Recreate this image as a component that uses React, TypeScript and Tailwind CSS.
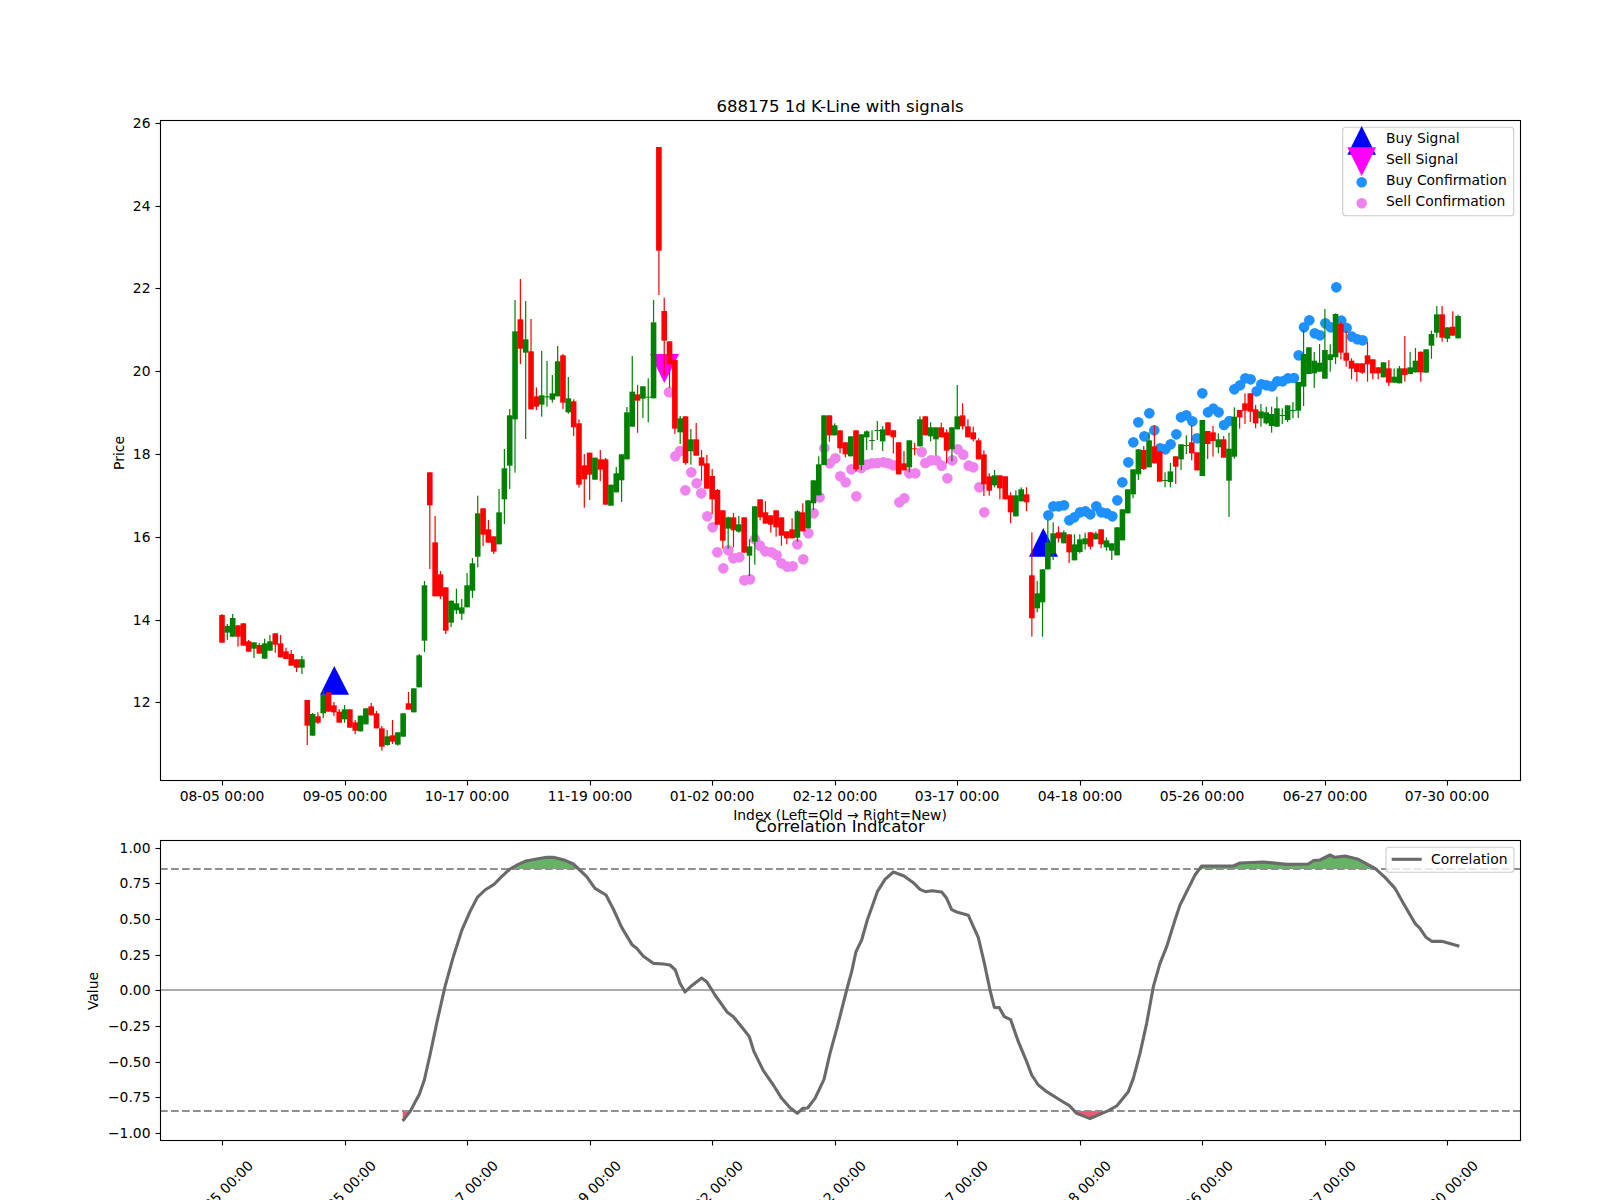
const X = (i: number) => 222 + 5.328 * i;

type C = [number, number, number, number, number];
const R = 1;
const G = 0;

// zoomed pixel readings: [colour, bodyTop, bodyBottom, wickTop, wickBottom], 3x from a y origin
const seg1: C[] = [
  [R,405,488,402,488],[G,438,458,432,480],[G,414,470,402,470],[R,436,470,436,500],[R,430,497,430,497],
  [R,484,515,480,515],[G,487,506,487,534],[R,495,521,489,521],[G,490,536,476,536],[G,484,512,465,512],
  [R,460,494,460,518],[R,490,532,465,532],[R,514,537,503,537],[R,522,557,510,557],[R,538,563,538,576],
  [G,538,563,528,582],[R,660,737,660,795],[G,702,767,699,767],[R,709,728,697,732],[G,645,700,630,714],
  [R,637,695,637,695],[R,676,697,666,708],[R,695,728,687,728],[G,688,718,675,728],[R,688,743,688,743],
  [R,727,752,720,762],[G,707,754,707,754],[G,685,733,685,733],[R,679,706,669,706],[R,700,745,693,745],
  [R,745,800,738,812],[G,769,795,750,797],[R,766,785,720,792],[G,757,794,757,797],[G,700,770,700,770],
  [R,670,689,636,689],[G,625,697,625,697],[G,526,622,522,622],[G,316,482,303,516],[R,-23,76,-23,267],
  [R,187,349,108,349],[R,283,349,273,357],[R,322,452,322,462],[G,362,428,362,441],[G,370,391,326,402],
  [G,382,401,357,420],[G,316,382,279,382],[G,250,332,234,354],[G,100,230,47,262],[R,85,164,85,198],
  [R,148,188,120,188],[R,169,215,169,222],[G,97,193,27,193],
];
const seg2: C[] = [
  [G,745,838,687,912],[G,586,737,567,807],[G,334,598,240,758],[R,298,386,177,432],[G,358,398,243,657],
  [R,394,568,297,568],[R,529,560,502,570],[G,526,554,393,590],[G,529,532,423,560],[G,520,539,465,548],
  [G,424,529,378,529],[R,406,548,402,567],[G,535,577,471,581],[R,544,622,538,648],[R,610,794,598,803],
  [R,736,778,702,863],[R,698,764,698,840],[G,713,779,713,779],[R,718,749,690,783],[R,718,854,714,854],
  [G,794,857,794,857],[G,760,817,741,817],[G,703,781,703,846],[G,577,718,561,718],[G,515,620,408,620],
  [R,523,542,495,638],[G,499,536,499,594],[G,530,533,475,607],[G,307,535,240,535],
];
const seg3: C[] = [[R,81,392,81,525],[R,573,662,533,768],[R,664,733,664,803]];
const seg4: C[] = [
  [R,60,266,60,282],[G,235,277,228,312],[R,229,369,229,374],[G,298,334,267,374],[R,298,347,249,347],
  [R,352,377,330,422],[R,370,446,345,446],[R,408,478,387,522],[R,450,554,447,554],[R,511,602,511,626],
  [G,532,566,530,626],[R,532,571,519,622],[G,553,575,528,578],[R,532,638,532,638],[G,619,647,598,708],
  [G,499,605,499,674],[R,478,532,478,541],[R,517,551,484,551],[R,526,554,526,578],[R,511,562,511,590],
  [R,532,587,532,617],[R,574,595,574,613],[R,568,595,535,595],[G,514,593,511,605],[R,517,574,490,574],
  [G,481,565,481,565],[G,421,490,421,510],[G,373,466,349,466],[G,226,375,226,375],[R,226,286,226,305],
  [G,256,286,250,286],[R,271,325,271,340],[R,307,343,307,352],[G,289,349,289,349],[R,271,388,271,395],
  [G,283,375,283,390],[G,274,292,271,330],[G,300,303,271,330],[G,270,273,243,300],[G,268,304,258,333],
  [R,247,286,247,286],[R,271,292,271,340],[R,307,403,307,403],[R,370,391,333,391],[G,301,382,301,397],
  [R,325,328,309,346],
];
const seg5: C[] = [
  [G,118,199,109,199],[R,109,166,109,166],[G,142,169,127,184],[G,142,178,142,226],[R,142,172,128,172],
  [R,157,212,148,250],[G,142,208,142,244],[G,109,148,15,148],[R,106,139,70,148],[R,139,172,118,172],
  [R,157,178,140,184],[R,181,238,175,238],[R,223,313,211,348],[R,289,332,280,347],[G,286,316,270,322],
  [R,286,325,286,358],[R,289,358,289,358],[R,346,397,337,430],[G,346,409,331,409],[G,328,364,322,364],
  [R,343,367,322,393],[R,586,715,457,770],[G,640,685,603,697],[G,568,667,568,770],[G,487,568,420,568],
  [G,460,520,427,540],[R,457,475,439,487],[G,457,490,451,490],[R,463,517,463,549],[G,493,541,463,541],
  [G,478,516,463,520],[G,475,493,458,509],[R,457,500,457,508],[G,460,478,455,478],[R,448,493,448,505],
  [G,481,502,472,512],[G,490,512,490,540],[G,442,526,442,526],[G,388,481,388,481],[G,328,400,328,400],
  [G,268,343,268,355],[G,208,283,208,300],[R,210,267,198,270],[G,181,262,157,262],[R,199,250,136,250],
  [R,214,305,214,305],[G,300,303,277,322],[G,274,306,249,322],[R,229,260,229,312],[G,193,238,193,270],
  [G,195,198,166,222],[R,187,220,136,241],[R,217,271,217,271],
];
const seg6: C[] = [
  [G,930,1098,930,1098],[R,963,1002,963,1047],[R,967,993,948,1040],[G,988,1012,970,1030],[R,988,1043,978,1043],
  [G,1016,1112,968,1221],[G,920,1040,892,1046],[R,900,922,900,956],[R,880,902,850,942],[R,850,905,850,936],
  [R,898,940,885,955],[G,904,925,882,950],[G,907,940,890,943],[G,912,948,890,968],[G,895,950,860,950],
  [G,915,918,895,942],[G,886,930,886,936],[G,900,903,876,925],[G,816,902,816,924],[G,732,830,660,888],
  [G,712,792,712,792],[G,752,790,726,834],[G,758,785,702,785],[G,720,806,597,806],[G,733,750,703,785],
  [G,612,742,610,762],[R,642,728,636,748],[R,728,752,662,770],[R,752,776,745,808],[R,760,786,760,815],
  [R,760,788,760,792],[R,736,763,696,815],[R,748,790,748,808],[R,772,790,772,808],[G,757,802,757,802],
  [R,775,818,750,828],[G,800,818,775,818],[G,775,820,768,820],[R,775,795,678,815],[G,772,792,726,792],
  [G,752,787,714,787],[R,725,787,725,815],[G,718,788,718,788],[G,672,707,662,746],[G,613,668,588,683],
  [R,613,683,588,695],[G,652,686,652,696],[R,650,677,604,677],[G,618,685,614,685],
];

const toReal = (s: C[], oy: number) =>
  s.map(([c, a, b, d, e]) => ({ c, a: oy + a / 3, b: oy + b / 3, d: oy + d / 3, e: oy + e / 3 }));
const candles = [
  ...toReal(seg1, 480),
  ...toReal(seg2, 220),
  ...toReal(seg3, 120),
  ...toReal(seg4, 340),
  ...toReal(seg5, 380),
  ...toReal(seg6, 110),
];

const pts = (a: number[], ox: number, oy: number) => {
  const out: [number, number][] = [];
  for (let i = 0; i < a.length; i += 2) out.push([ox + a[i] / 3, oy + a[i + 1] / 3]);
  return out;
};

const violet = [
  ...pts([87,157,106,349,120,333,136,451,154,397,170,430,184,460,202,529,218,562,232,637,250,685,265,631,280,655,298,652,313,721,330,718,345,598,360,617,376,634,395,637,410,646,424,670,442,680,458,679,472,613,490,658,505,580,521,520,539,472,553,325,569,370,586,355,601,409,617,427,634,388,649,469,664,384,680,374,696,370,712,369,730,367,745,370,760,376,778,487,793,475,808,400,826,400], 640, 340),
  ...pts([5,216,16,249,33,241,49,241,65,257,82,295,97,241,113,208,130,224,146,257,160,262,178,322,193,397], 920, 380),
];
const blue = [
  ...pts([385,406,400,379,416,379,432,376,448,421,463,412,480,397,496,394,511,403,529,379,544,397,560,400,577,409,592,361,607,307,625,247,640,187,655,127,673,169,688,100,703,151,720,205,736,208,752,193,769,163,783,112,799,106,817,124,831,175,847,40], 920, 380),
  ...pts([24,907,40,896,56,907,72,945,88,933,103,838,120,826,136,805,152,808,170,844,184,823,200,826,216,829,232,814,248,814,264,805,282,804,296,736,312,652,328,631,344,670,360,676,376,640,392,652,409,532,424,632,440,654,456,680,472,688,488,691], 1200, 110),
];

const line = [
  ...pts([38,843,60,815,88,763,103,720,120,645,140,550,165,440,190,350,215,272,240,215,262,172,285,150,312,133,335,110,360,87,385,73,408,63,440,57,470,52,490,52,520,59,550,72,566,87,590,110,615,145,648,165,670,207,695,262,726,314,740,325,760,349,790,370,820,372,840,375,856,390,870,430,885,456,905,437,935,414,950,425,975,465,1012,517,1030,530,1060,567,1078,590,1092,635,1120,692,1150,735,1175,775], 390, 840),
  ...pts([30,803,52,820,68,805,83,804,105,775,132,718,150,640,172,560,200,450,215,395,228,335,245,300,262,240,292,155,315,118,340,96,372,108,400,128,420,148,436,155,456,152,485,156,500,175,515,209,530,216,565,226,595,293,612,365,630,450,643,502,658,503,673,530,692,539,715,605,740,665,755,705,775,735,800,755,840,780,868,797,890,820,930,836,985,812,1010,798,1045,755,1060,715,1080,640,1100,550,1120,440,1140,370,1160,320,1185,240], 780, 840),
  ...pts([150,255,175,205,195,165,215,138,260,138,310,138,330,129,400,126,470,133,535,132,550,122,570,120,600,105,615,112,645,108,685,118,735,145,765,172,795,205,820,250,855,310,870,325,888,352,905,364,935,364,965,372,988,379], 1130, 820),
];
const linePts = line.map(([x, y]) => `${x},${y}`).join(" ");
const first = line[0][0];
const last = line[line.length - 1][0];

const dates = ["08-05","09-05","10-17","11-19","01-02","02-12","03-17","04-18","05-26","06-27","07-30"];
const tickX = (k: number) => Math.round(222 + 122.54 * k) + 0.5;
const priceTicks = [12, 14, 16, 18, 20, 22, 24, 26];
const corrTicks = [1, 0.75, 0.5, 0.25, 0, -0.25, -0.5, -0.75, -1];
const priceY = (p: number) => Math.round(702.3 - (p - 12) * 41.4) + 0.5;
const corrY = (v: number) => Math.round(990.35 - 142.65 * v) + 0.5;
const fmt = (v: number) => (v < 0 ? "\u2212" : "") + Math.abs(v).toFixed(2);

export default function App() {
  return (
    <div className="w-[1600px] h-[1200px] overflow-hidden bg-white">
      <svg
        width={1600}
        height={1200}
        viewBox="0 0 1600 1200"
        className="block font-['DejaVu_Sans',sans-serif] text-[13.89px]"
      >
        <defs>
          <clipPath id="top"><rect x={160} y={840} width={1360} height={29} /></clipPath>
          <clipPath id="bot"><rect x={160} y={1111} width={1360} height={28} /></clipPath>
        </defs>

        {/* price axes content */}
        {violet.map(([x, y], i) => <circle key={`v${i}`} cx={x} cy={y} r={5.3} fill="#ee82ee" />)}
        {blue.map(([x, y], i) => <circle key={`b${i}`} cx={x} cy={y} r={5.3} fill="#1e90ff" />)}
        <polygon points="334.3,666 320,694.7 349,694.7" fill="#0000ff" />
        <polygon points="1043.3,528 1029,556.7 1058,556.7" fill="#0000ff" />
        <polygon points="664.3,383 650,354 679,354" fill="#ff00ff" />
        {candles.map((k, i) => {
          const col = k.c === R ? "#ff0000" : "#008000";
          return (
            <g key={i} fill={col}>
              <rect x={X(i) - 0.6} y={k.d} width={1.2} height={Math.max(0.5, k.e - k.d)} />
              <rect x={X(i) - 2.8} y={k.a} width={5.6} height={Math.max(1, k.b - k.a)} />
            </g>
          );
        })}
        <rect x={160.5} y={120.5} width={1360} height={660} fill="none" stroke="#000" strokeWidth={1.1} />

        {priceTicks.map((p) => (
          <g key={p}>
            <line x1={155.5} x2={160} y1={priceY(p)} y2={priceY(p)} stroke="#000" strokeWidth={1.1} />
            <text x={150.5} y={priceY(p) + 4.4} textAnchor="end">{p}</text>
          </g>
        ))}
        {dates.map((d, k) => (
          <g key={d}>
            <line x1={tickX(k)} x2={tickX(k)} y1={781} y2={785.5} stroke="#000" strokeWidth={1.1} />
            <text x={tickX(k) - 0.5} y={801} textAnchor="middle">{d} 00:00</text>
          </g>
        ))}
        <text x={840} y={112} textAnchor="middle" className="text-[16.55px]">688175 1d K-Line with signals</text>
        <text transform="translate(123.5 453) rotate(-90)" textAnchor="middle">Price</text>
        <text x={840} y={820} textAnchor="middle">Index (Left=Old → Right=New)</text>

        {/* legend of the price axes */}
        <rect x={1342.7} y={127.3} width={171} height={88.4} rx={3} fill="#ffffff" fillOpacity={0.8} stroke="#cccccc" strokeWidth={1.1} />
        <polygon points="1361.7,126 1347.3,154.7 1376,154.7" fill="#0000ff" />
        <polygon points="1361.7,176 1347.3,147.3 1376,147.3" fill="#ff00ff" />
        <circle cx={1361.7} cy={182.3} r={5.3} fill="#1e90ff" />
        <circle cx={1361.7} cy={203.3} r={5.3} fill="#ee82ee" />
        <text x={1386} y={143.3}>Buy Signal</text>
        <text x={1386} y={164.2}>Sell Signal</text>
        <text x={1386} y={185}>Buy Confirmation</text>
        <text x={1386} y={206}>Sell Confirmation</text>

        {/* correlation axes content */}
        <polygon clipPath="url(#top)" points={`${first},869 ${linePts} ${last},869`} fill="#008000" fillOpacity={0.6} />
        <polygon clipPath="url(#bot)" points={`${first},1111 ${linePts} ${last},1111`} fill="#dc143c" fillOpacity={0.7} />
        <line x1={160} x2={1520} y1={869} y2={869} stroke="#8f8f8f" strokeWidth={2.1} strokeDasharray="7.7 3.3" />
        <line x1={160} x2={1520} y1={1111} y2={1111} stroke="#8f8f8f" strokeWidth={2.1} strokeDasharray="7.7 3.3" />
        <line x1={160} x2={1520} y1={990} y2={990} stroke="#ababab" strokeWidth={2} />
        <polyline points={linePts} fill="none" stroke="#6a6a6a" strokeWidth={3.1} strokeLinejoin="round" />
        <rect x={160.5} y={840.5} width={1360} height={300} fill="none" stroke="#000" strokeWidth={1.1} />

        {corrTicks.map((v) => (
          <g key={v}>
            <line x1={155.5} x2={160} y1={corrY(v)} y2={corrY(v)} stroke="#000" strokeWidth={1.1} />
            <text x={150.5} y={corrY(v) + 4} textAnchor="end">{fmt(v)}</text>
          </g>
        ))}
        {dates.map((d, k) => (
          <g key={`l${d}`}>
            <line x1={tickX(k)} x2={tickX(k)} y1={1141} y2={1145.5} stroke="#000" strokeWidth={1.1} />
            <text transform={`translate(${tickX(k) - 2} 1193) rotate(-45)`} y={5} textAnchor="middle">{d} 00:00</text>
          </g>
        ))}
        <text x={840} y={832} textAnchor="middle" className="text-[16.55px]">Correlation Indicator</text>
        <text transform="translate(98 991) rotate(-90)" textAnchor="middle">Value</text>

        {/* legend of the correlation axes */}
        <rect x={1386} y={847.3} width={128} height={25} rx={3} fill="#ffffff" fillOpacity={0.8} stroke="#cccccc" strokeWidth={1.1} />
        <line x1={1391.7} x2={1421.7} y1={859.3} y2={859.3} stroke="#6a6a6a" strokeWidth={3.1} />
        <text x={1431} y={864}>Correlation</text>
      </svg>
    </div>
  );
}
